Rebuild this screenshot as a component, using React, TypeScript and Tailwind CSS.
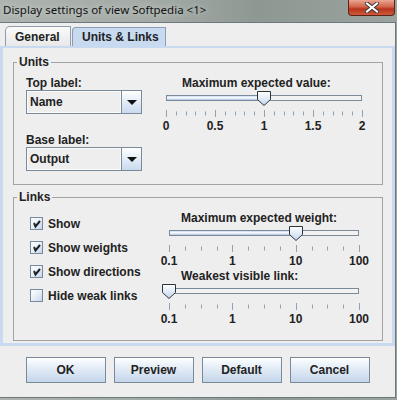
import React from 'react'

const ui = "font-['Liberation_Sans',Arial,sans-serif] text-[12px] font-bold leading-[14px] text-[#222222]"

type Label = { text: string; at: number }

function Slider({
  title,
  titleClass,
  trackW,
  intervals,
  majorEvery,
  labels,
  value,
  className,
}: {
  title: string
  titleClass: string
  trackW: number
  intervals: number
  majorEvery: number
  labels: Label[]
  value: number
  className: string
}) {
  const ticks = Array.from({ length: intervals + 1 }, (_, i) => i)
  return (
    <div className={className}>
      <div className={titleClass}>{title}</div>
      {/* track + thumb */}
      <div className="relative mt-[1px] h-[15px]">
        <div className="absolute left-[7px] right-[7px] top-[4px] h-[6px] border border-[#7a8a99] bg-[#f2f2f2]">
          <div
            className="h-full bg-[linear-gradient(180deg,#c6d8ee_0%,#ffffff_45%,#a9c1de_100%)]"
            style={{ width: `${value * 100}%` }}
          />
        </div>
        <svg
          className="absolute top-0"
          style={{ left: value * trackW }}
          width="15"
          height="15"
          viewBox="0 0 15 15"
        >
          <defs>
            <linearGradient id="thumbg" x1="0" y1="0" x2="0" y2="1">
              <stop offset="0" stopColor="#ffffff" />
              <stop offset="1" stopColor="#c3d6ee" />
            </linearGradient>
          </defs>
          <path d="M0.5 0.5H13.5V8.5L7 14.5L0.5 8.5Z" fill="url(#thumbg)" stroke="#2e3338" />
        </svg>
      </div>
      {/* ticks */}
      <svg className="mt-[4px] block" width={trackW + 14} height="7">
        {ticks.map((i) => {
          const x = Math.round(7 + (i * trackW) / intervals) + 0.5
          const major = i % majorEvery === 0
          return (
            <line
              key={i}
              x1={x}
              x2={x}
              y1={major ? 0 : 1.5}
              y2={major ? 7 : 5.5}
              stroke="#8ea2b8"
              strokeWidth="1"
            />
          )
        })}
      </svg>
      {/* labels */}
      <div className="relative mt-[2px] h-[14px]">
        {labels.map((l) => (
          <span
            key={l.text}
            className="absolute top-0 -translate-x-1/2 whitespace-nowrap"
            style={{ left: 7 + l.at * trackW }}
          >
            {l.text}
          </span>
        ))}
      </div>
    </div>
  )
}

function Combo({ value }: { value: string }) {
  return (
    <div className="flex h-[24px] w-[116px] border border-[#7a8a99] bg-[#eeeeee]">
      <div className="flex flex-1 items-center border border-[#fafafa] pl-[2px]">{value}</div>
      <div className="flex w-[20px] items-center justify-center border-l border-[#7a8a99] bg-[linear-gradient(180deg,#ffffff_0%,#e6eef8_45%,#c9daee_100%)]">
        <svg width="10" height="5" viewBox="0 0 10 5">
          <path d="M0 0H10L5 5Z" fill="#111111" />
        </svg>
      </div>
    </div>
  )
}

function Check({ checked, label }: { checked: boolean; label: string }) {
  return (
    <div className="flex h-[13px] items-center">
      <div className="flex h-[13px] w-[13px] items-center justify-center border border-[#7a8a99] bg-[linear-gradient(135deg,#ffffff_0%,#e8eff8_50%,#c3d6ee_100%)]">
        {checked && (
          <svg width="11" height="11" viewBox="0 0 11 11">
            <path d="M3 5L4.5 8.5L9 3" fill="none" stroke="#222222" strokeWidth="2" />
          </svg>
        )}
      </div>
      <span className="ml-[5px]">{label}</span>
    </div>
  )
}

function Btn({ children }: { children: React.ReactNode }) {
  return (
    <button className="h-[26px] w-[80px] border border-[#7a8a99] bg-[linear-gradient(180deg,#ffffff_0%,#eaf1f9_30%,#c4d6eb_100%)] text-center">
      {children}
    </button>
  )
}

const weightLabels: Label[] = [
  { text: '0.1', at: 0 },
  { text: '1', at: 1 / 3 },
  { text: '10', at: 2 / 3 },
  { text: '100', at: 1 },
]

export default function App() {
  return (
    <div className="flex h-[400px] w-[397px] flex-col overflow-hidden bg-[linear-gradient(90deg,#adb4b0_0%,#a2aaa6_40%,#8e9893_65%,#9aa39e_100%)]">
      {/* title bar */}
      <div className="flex h-[22px] shrink-0 items-start justify-between">
        <span className="pl-[3px] pt-[3px] font-['Noto_Sans',sans-serif] text-[11.5px] leading-[14px] text-[#111111] [text-shadow:0_0_6px_#d8dcda]">
          Display settings of view Softpedia &lt;1&gt;
        </span>
        <div className="mr-[2px] flex h-[16px] w-[47px] items-center justify-center rounded-b-[4px] border border-t-0 border-[#5a2418] bg-[linear-gradient(180deg,#e9a792_0%,#d2634a_45%,#b8341c_60%,#cf5a3c_100%)]">
          <svg width="14" height="11" viewBox="0 0 14 11">
            <path d="M2 1.5L12 9.5M12 1.5L2 9.5" stroke="#3b3b3b" strokeWidth="4" strokeLinecap="square" />
            <path d="M2 1.5L12 9.5M12 1.5L2 9.5" stroke="#ffffff" strokeWidth="2" strokeLinecap="square" />
          </svg>
        </div>
      </div>

      {/* window body */}
      <div className={`${ui} flex h-[376px] w-[396px] shrink-0 flex-col border-r border-b border-t border-[#6c7780] bg-[#eeeeee] pt-[3px]`}>
        {/* tabs */}
        <div className="flex h-[20px] items-end pl-[5px]">
          <div className="flex h-[20px] w-[66px] items-center rounded-tl-[5px] border border-b-0 border-[#8e9cab] bg-[linear-gradient(180deg,#fafafa_0%,#e8e8e8_100%)] pl-[9px]">
            General
          </div>
          <div className="ml-[1px] flex h-[19px] w-[94px] items-center rounded-tl-[4px] border border-b-0 border-[#8a9db3] bg-[#c8daf0] pl-[9px]">
            Units &amp; Links
          </div>
        </div>

        {/* tab panel */}
        <div className="h-[300px] w-[395px] border-x-[3px] border-t-[2px] border-b-[3px] border-[#c8daf0] pt-[7px]">
          <fieldset className="ml-[10px] h-[130px] w-[370px] border border-[#a3a3a3]">
            <legend className="ml-[3px] px-[2px]">Units</legend>
            <div className="flex pl-[12px]">
              <div className="mt-[7px] flex w-[133px] flex-col">
                <span>Top label:</span>
                <Combo value="Name" />
                <span className="mt-[19px]">Base label:</span>
                <Combo value="Output" />
              </div>
              <Slider
                className="mt-[7px] w-[210px]"
                title="Maximum expected value:"
                titleClass="pl-[23px]"
                trackW={196}
                intervals={20}
                majorEvery={5}
                value={0.5}
                labels={[
                  { text: '0', at: 0 },
                  { text: '0.5', at: 0.25 },
                  { text: '1', at: 0.5 },
                  { text: '1.5', at: 0.75 },
                  { text: '2', at: 1 },
                ]}
              />
            </div>
          </fieldset>

          <fieldset className="ml-[10px] mt-[5px] h-[151px] w-[370px] border border-[#a3a3a3]">
            <legend className="ml-[3px] px-[2px]">Links</legend>
            <div className="flex pl-[16px]">
              <div className="mt-[13px] flex w-[132px] flex-col gap-[11px]">
                <Check checked label="Show" />
                <Check checked label="Show weights" />
                <Check checked label="Show directions" />
                <Check checked={false} label="Hide weak links" />
              </div>
              <div className="mt-[7px] flex flex-col">
                <Slider
                  className="w-[204px]"
                  title="Maximum expected weight:"
                  titleClass="pl-[19px]"
                  trackW={190}
                  intervals={12}
                  majorEvery={4}
                  value={2 / 3}
                  labels={weightLabels}
                />
                <Slider
                  className="mt-[1px] w-[204px]"
                  title="Weakest visible link:"
                  titleClass="pl-[19px]"
                  trackW={190}
                  intervals={12}
                  majorEvery={4}
                  value={0}
                  labels={weightLabels}
                />
              </div>
            </div>
          </fieldset>
        </div>

        {/* buttons */}
        <div className="flex justify-center gap-[8px] pt-[11px]">
          <Btn>OK</Btn>
          <Btn>Preview</Btn>
          <Btn>Default</Btn>
          <Btn>Cancel</Btn>
        </div>
      </div>
    </div>
  )
}
